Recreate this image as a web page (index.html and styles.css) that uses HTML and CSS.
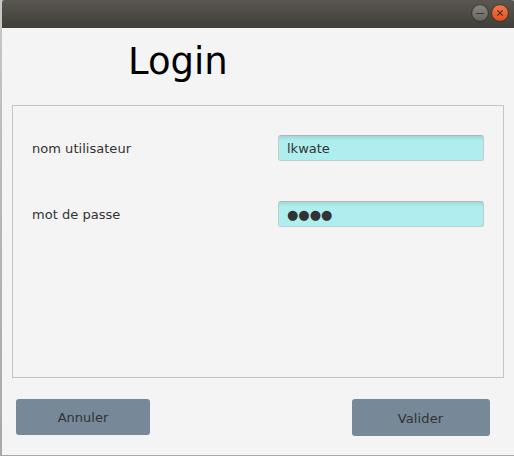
FILE: index.html
```html
<!DOCTYPE html>
<html lang="fr">
<head>
<meta charset="utf-8">
<title>Login</title>
<link rel="stylesheet" href="styles.css">
</head>
<body>
<div class="window">
  <header class="titlebar">
    <svg class="control" viewBox="0 0 18 18" aria-hidden="true">
      <defs><linearGradient id="grey" x1="0" y1="0" x2="0" y2="1"><stop offset="0" stop-color="#898780"/><stop offset="1" stop-color="#66655e"/></linearGradient></defs>
      <circle cx="9" cy="9" r="8.4" fill="url(#grey)" stroke="#35342f"/>
      <path d="M5 9.5h8" stroke="#3c3b37"/>
    </svg>
    <svg class="control" viewBox="0 0 18 18" aria-hidden="true">
      <defs><linearGradient id="orange" x1="0" y1="0" x2="0" y2="1"><stop offset="0" stop-color="#f5784f"/><stop offset="1" stop-color="#e2501e"/></linearGradient></defs>
      <circle cx="9" cy="9" r="8.4" fill="url(#orange)" stroke="#45342c"/>
      <path d="M6.3 6.3l5.4 5.4M11.7 6.3l-5.4 5.4" stroke="#4a2e1b" stroke-width="1.2"/>
    </svg>
  </header>
  <main class="content">
    <h1 class="heading">Login</h1>
    <section class="panel">
      <div class="row"><span class="label">nom utilisateur</span><div class="field">lkwate</div></div>
      <div class="row"><span class="label">mot de passe</span><div class="field"><span class="dots">●●●●</span></div></div>
    </section>
    <div class="actions">
      <button class="button cancel">Annuler</button>
      <button class="button submit">Valider</button>
    </div>
  </main>
</div>
</body>
</html>
```
FILE: styles.css
```css
* { box-sizing: border-box; }
body {
  margin: 0;
  height: 456px;
  overflow: hidden;
  padding: 0 0 1px 2px;
  background: linear-gradient(#c8c8c8, #b5b5b5 50%, #a8a8a8);
  font: 13px/16px "DejaVu Sans", sans-serif;
  color: #323232;
}
.window {
  height: 455px;
  background: #f4f4f4;
  border-radius: 2px 2px 0 0;
  overflow: hidden;
}
.titlebar {
  height: 28px;
  display: flex;
  justify-content: flex-end;
  gap: 2px;
  padding: 4px 5px 0 0;
  background: linear-gradient(#5a5750, #3f3e38);
}
.control { width: 18px; height: 18px; }
.content { padding: 0 10px; }
.heading {
  margin: 0;
  height: 77px;
  padding: 12px 0 0 116px;
  font-size: 37px;
  line-height: 44px;
  font-weight: 400;
  color: #000;
}
.panel {
  height: 273px;
  border: 1px solid #c4c4c4;
  padding: 29px 19px 0;
  display: flex;
  flex-direction: column;
  gap: 40px;
}
.row {
  display: flex;
  justify-content: space-between;
  align-items: center;
  height: 26px;
}
.label { padding-top: 2px; letter-spacing: 0.03px; }
.field {
  width: 206px;
  height: 26px;
  padding: 5px 8px;
  border: 1px solid #c3cccc;
  border-top-color: #b5b5b5;
  border-radius: 3px;
  background: linear-gradient(#9fdada, #afeeee 5px);
}
.dots { display: block; }
.actions {
  display: flex;
  justify-content: space-between;
  align-items: flex-start;
  padding: 21px 14px 0 4px;
}
.button {
  border: 0;
  padding: 2px 0 0;
  border-radius: 3px;
  background: #778899;
  color: #323232;
  font: inherit;
}
.cancel { width: 134px; height: 36px; }
.submit { width: 138px; height: 37px; padding: 3px 1px 0 0; letter-spacing: 0.1px; }
```
